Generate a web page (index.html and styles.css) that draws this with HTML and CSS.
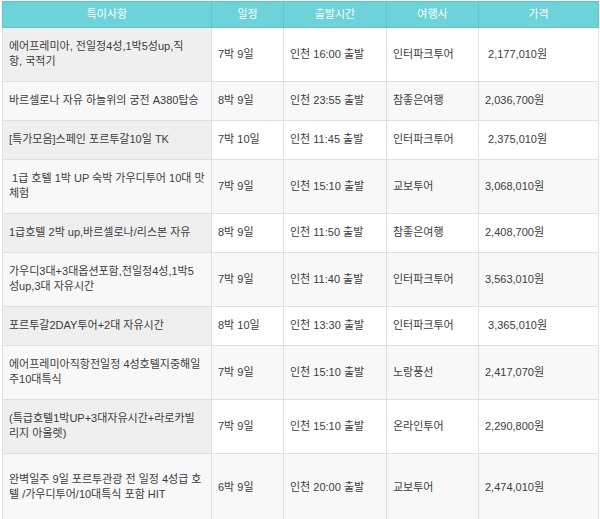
FILE: index.html
```html
<!DOCTYPE html>
<html lang="ko">
<head>
<meta charset="utf-8">
<link rel="stylesheet" href="styles.css">
</head>
<body>
<div class="wrap">
<table class="tours">
<colgroup>
<col class="c1"><col class="c2"><col class="c3"><col class="c4"><col class="c5">
</colgroup>
<thead>
<tr><th>특이사항</th><th>일정</th><th>출발시간</th><th>여행사</th><th>가격</th></tr>
</thead>
<tbody>
<tr><td>에어프레미아, 전일정4성,1박5성up,직<br>항, 국적기</td><td>7박 9일</td><td>인천 16:00 출발</td><td>인터파크투어</td><td>&nbsp;2,177,010원</td></tr>
<tr><td>바르셀로나 자유 하늘위의 궁전 A380탑승</td><td>8박 9일</td><td>인천 23:55 출발</td><td>참좋은여행</td><td>2,036,700원</td></tr>
<tr><td>[특가모음]스페인 포르투갈10일 TK</td><td>7박 10일</td><td>인천 11:45 출발</td><td>인터파크투어</td><td>&nbsp;2,375,010원</td></tr>
<tr><td>&nbsp;1급 호텔 1박 UP 숙박 가우디투어 10대 맛<br>체험</td><td>7박 9일</td><td>인천 15:10 출발</td><td>교보투어</td><td>3,068,010원</td></tr>
<tr><td>1급호텔 2박 up,바르셀로나/리스본 자유</td><td>8박 9일</td><td>인천 11:50 출발</td><td>참좋은여행</td><td>2,408,700원</td></tr>
<tr><td>가우디3대+3대옵션포함,전일정4성,1박5<br>성up,3대 자유시간</td><td>7박 9일</td><td>인천 11:40 출발</td><td>인터파크투어</td><td>3,563,010원</td></tr>
<tr><td>포르투갈2DAY투어+2대 자유시간</td><td>8박 10일</td><td>인천 13:30 출발</td><td>인터파크투어</td><td>&nbsp;3,365,010원</td></tr>
<tr><td>에어프레미아직항전일정 4성호텔지중해일<br>주10대특식</td><td>7박 9일</td><td>인천 15:10 출발</td><td>노랑풍선</td><td>2,417,070원</td></tr>
<tr><td>(특급호텔1박UP+3대자유시간+라로카빌<br>리지 아울렛)</td><td>7박 9일</td><td>인천 15:10 출발</td><td>온라인투어</td><td>2,290,800원</td></tr>
<tr class="tall"><td>완벽일주 9일 포르투관광 전 일정 4성급 호<br>텔 /가우디투어/10대특식 포함 HIT</td><td>6박 9일</td><td>인천 20:00 출발</td><td>교보투어</td><td>2,474,010원</td></tr>
</tbody>
</table>
</div>
</body>
</html>
```

FILE: styles.css
```css
html, body {
  margin: 0;
  padding: 0;
  background: #ffffff;
}
.wrap {
  padding: 1px 2px 0 2px;
}
.tours {
  border-collapse: collapse;
  table-layout: fixed;
  width: 596px;
  font-family: "Liberation Sans", "Noto Sans CJK KR", sans-serif;
  font-size: 11px;
  color: #3c3c3c;
}
.c1 { width: 209px; }
.c2 { width: 72px; }
.c3 { width: 103px; }
.c4 { width: 92px; }
.c5 { width: 120px; }
.tours th {
  background: #6dd3d8;
  color: #ffffff;
  font-size: 11px;
  font-weight: normal;
  line-height: 15px;
  padding: 5px 6px 5px 6px;
  border: 1px solid #5cc6cb;
  text-align: center;
}
.tours td {
  line-height: 15px;
  padding: 11px 6px 12px 6px;
  border: 1px solid #e0e0e0;
  text-align: left;
  vertical-align: middle;
  white-space: nowrap;
}
.tours tbody tr:nth-child(even) td {
  background: #f8f8f8;
}
.tours tbody td:first-child {
  background: #efefef;
}
.tours tbody tr.tall td {
  padding-top: 18px;
  padding-bottom: 18px;
}
```
